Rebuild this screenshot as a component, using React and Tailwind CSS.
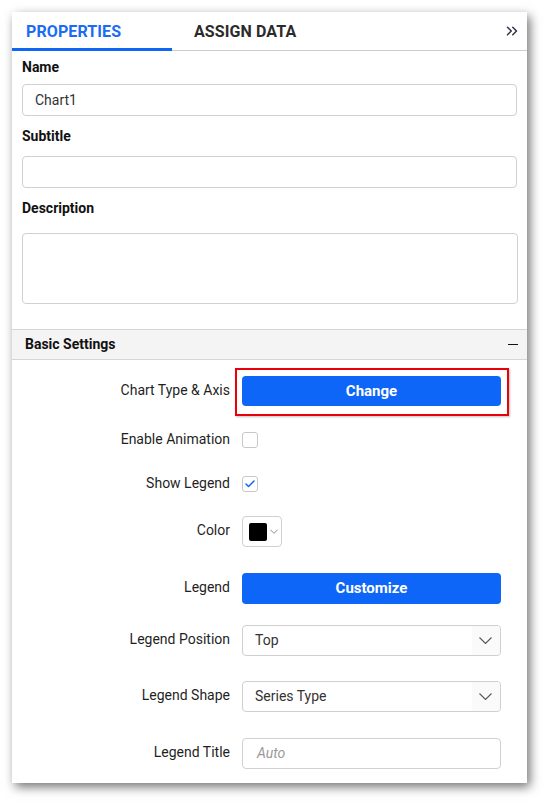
import React from 'react';
import { ChevronsRight, Check } from 'lucide-react';

const font = { fontFamily: 'Roboto, "Liberation Sans", sans-serif' };

const Chevron = ({ w = 13, h = 7, className = '' }) => (
  <svg width={w} height={h} viewBox="0 0 13 7" fill="none" className={className}>
    <path d="M0.5 0.5 L6.5 6.5 L12.5 0.5" stroke="currentColor" strokeWidth="1.1" />
  </svg>
);

const Row = ({ label, className = '', children }) => (
  <div className={`flex items-center ${className}`}>
    <div className="w-[230px] pb-[2px] pr-[12px] text-right text-[14px] text-[#1f1f1f]">{label}</div>
    <div className="w-[259px]">{children}</div>
  </div>
);

const Dropdown = ({ value }) => (
  <div className="flex h-[31px] items-center justify-between rounded-[4px] border border-[#cfcfcf] bg-white">
    <span className="pl-[12px] text-[14px] text-[#333]">{value}</span>
    <div className="flex h-full w-[28px] items-center justify-start rounded-r-[4px] bg-[#fafafa] pl-[7px]">
      <Chevron className="text-[#555]" />
    </div>
  </div>
);

const App = () => {
  return (
    <div className="h-[803px] w-full bg-white pl-[12px] pt-[12px]" style={font}>
      <div className="h-[771px] w-[515px] bg-white shadow-[3px_4px_10px_rgba(0,0,0,0.55)]">
        {/* tabs */}
        <div className="flex h-[39px] items-stretch border-b border-[#cccccc]">
          <div className="relative flex w-[160px] items-center pl-[14px] pt-[1px] text-[16px] font-bold tracking-[0.1px] text-[#1a6cf5]">
            PROPERTIES
            <div className="absolute bottom-[-1px] left-0 h-[3px] w-full bg-[#0d66f5]" />
          </div>
          <div className="flex items-center pl-[22px] pt-[1px] text-[16px] font-bold tracking-[0.1px] text-[#2b2b2b]">
            ASSIGN DATA
          </div>
          <div className="ml-auto flex items-center pr-[6px]">
            <ChevronsRight size={18} strokeWidth={2} className="text-[#2c3548]" />
          </div>
        </div>

        <div className="px-[10px]">
          <div className="mt-[6px] text-[14px] font-bold leading-[20px] text-[#111]">Name</div>
          <div className="mt-[7px] flex h-[32px] items-center rounded-[4px] border border-[#d0d0d0] pl-[12px] text-[14px] text-[#333]">
            Chart1
          </div>
          <div className="mt-[10px] text-[14px] font-bold leading-[20px] text-[#111]">Subtitle</div>
          <div className="mt-[10px] h-[32px] rounded-[4px] border border-[#d0d0d0]" />
          <div className="mt-[10px] text-[14px] font-bold leading-[20px] text-[#111]">Description</div>
          <div className="mt-[15px] h-[71px] w-[496px] rounded-[4px] border border-[#d0d0d0]" />
        </div>

        {/* basic settings header */}
        <div className="mt-[25px] flex h-[31px] items-center justify-between border-y border-[#d6d6d6] bg-[#f4f4f4] pl-[13px] pr-[9px]">
          <span className="text-[14px] font-bold text-[#111]">Basic Settings</span>
          <div className="h-[1.5px] w-[10px] bg-[#111]" />
        </div>

        <Row label="Chart Type & Axis" className="mt-[16px]">
          <div className="relative">
            <div className="absolute -bottom-[10px] -left-[7px] -right-[8px] -top-[8px] border-2 border-[#e8000b] shadow-[1px_1px_2px_rgba(0,0,0,0.25)]" />
            <button className="relative h-[30px] w-full rounded-[4px] bg-[#0d66f8] text-[15px] font-bold text-white">
              Change
            </button>
          </div>
        </Row>

        <Row label="Enable Animation" className="mt-[26px] h-[16px]">
          <div className="h-[16px] w-[16px] rounded-[3px] border border-[#c8c8c8] bg-white" />
        </Row>

        <Row label="Show Legend" className="mt-[28px] h-[16px]">
          <div className="flex h-[16px] w-[16px] items-center justify-center rounded-[3px] border border-[#c8c8c8] bg-white">
            <Check size={12} strokeWidth={3} className="text-[#0d66f8]" />
          </div>
        </Row>

        <Row label="Color" className="mt-[24px]">
          <div className="flex h-[31px] w-[40px] items-center rounded-[4px] border border-[#d0d0d0] pl-[6px]">
            <div className="h-[18px] w-[18px] rounded-[2px] bg-black" />
            <Chevron w={8} h={5} className="ml-[3px] text-[#555]" />
          </div>
        </Row>

        <Row label="Legend" className="mt-[26px]">
          <button className="h-[31px] w-full rounded-[4px] bg-[#0d66f8] text-[15px] font-bold text-white">
            Customize
          </button>
        </Row>

        <Row label="Legend Position" className="mt-[21px]">
          <Dropdown value="Top" />
        </Row>

        <Row label="Legend Shape" className="mt-[25px]">
          <Dropdown value="Series Type" />
        </Row>

        <Row label="Legend Title" className="mt-[26px]">
          <div className="flex h-[31px] items-center rounded-[4px] border border-[#d0d0d0] pl-[14px] text-[14px] italic text-[#9a9a9a]">
            Auto
          </div>
        </Row>
      </div>
    </div>
  );
};

export default App;
